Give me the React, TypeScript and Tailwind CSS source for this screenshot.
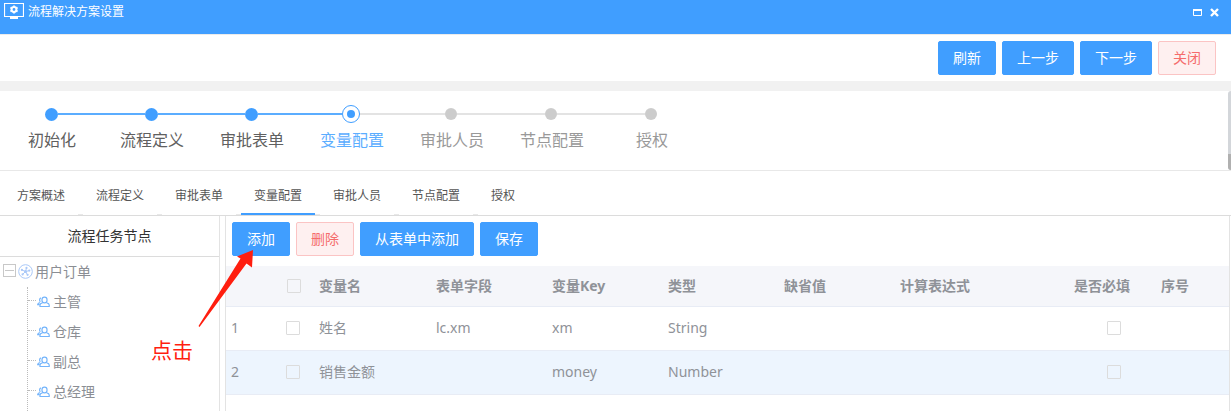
import { useState } from 'react'
import clsx from 'clsx'

const steps = ['初始化', '流程定义', '审批表单', '变量配置', '审批人员', '节点配置', '授权']
const tabs = ['方案概述', '流程定义', '审批表单', '变量配置', '审批人员', '节点配置', '授权']
const taskNodes = ['主管', '仓库', '副总', '总经理']
const currentStep = 3

const variables = [
  { name: '姓名', field: 'lc.xm', key: 'xm', type: 'String' },
  { name: '销售金额', field: '', key: 'money', type: 'Number' },
]

type ButtonProps = { children: string; danger?: boolean }

function Button({ children, danger }: ButtonProps) {
  return (
    <button
      type="button"
      className={clsx(
        'h-[34px] shrink-0 rounded-[2px] border px-[14px] text-sm leading-none',
        danger ? 'border-[#fbc4c4] bg-[#fef0f0] text-[#f56c6c]' : 'border-[#409eff] bg-[#409eff] text-white'
      )}
    >
      {children}
    </button>
  )
}

function Checkbox({ label }: { label: string }) {
  return (
    <input
      type="checkbox"
      aria-label={label}
      className="block size-[14px] appearance-none rounded-[1px] border border-[#dcdcdc] checked:bg-[#409eff]"
    />
  )
}

function SolutionIcon() {
  return (
    <svg width="20" height="18" viewBox="0 0 20 18" fill="none" aria-hidden="true">
      <path d="M.5 1.500h19v13H.5z" stroke="#fff" strokeWidth="1.200" />
      <path d="M6 15h8v2H6z" fill="#fff" />
      <circle cx="10" cy="7.500" r="2.400" stroke="#fff" strokeWidth="2" />
      <path
        d="M10 3.400v1.400M10 10.200v1.400M6.400 5.400l1.300.8M12.300 8.800l1.300.8M6.400 9.600l1.300-.8M12.300 6.200l1.300-.8"
        stroke="#fff"
        strokeWidth="1.800"
      />
    </svg>
  )
}

function FlowIcon() {
  return (
    <svg width="15" height="15" viewBox="0 0 15 15" fill="none" stroke="#a9c8f8" aria-hidden="true">
      <circle cx="7.500" cy="7.500" r="6.800" />
      <path d="M7.500 7.500 8.500 4M7.500 7.500l3.600-.8M7.500 7.500l1.800 3M7.500 7.500l-2.800 2.800M7.500 7.500 4 6" />
      <g fill="#a9c8f8" stroke="none">
        <circle cx="7.500" cy="7.500" r="1.500" />
        <circle cx="8.500" cy="3.900" r="1.100" />
        <circle cx="11.300" cy="6.600" r="1.100" />
        <circle cx="9.600" cy="10.800" r="1.100" />
        <circle cx="4.600" cy="10.400" r="1.100" />
        <circle cx="3.900" cy="5.900" r="1.100" />
      </g>
    </svg>
  )
}

function UsersIcon() {
  return (
    <svg width="13" height="12" viewBox="0 0 13 12" fill="none" stroke="#74b4fb" strokeWidth="1.200" aria-hidden="true">
      <rect x="5" y="1.200" width="5" height="5.600" rx="2.400" />
      <path d="M5.500 6.900C4 7.200 3 7.800 3 9v1.500h9.200V9c0-1.200-1-1.800-2.500-2.100" />
      <path d="M3.900 1.900C3 2.200 2.600 3 2.600 3.900c0 .8.300 1.400.8 1.800M3 6.600C1.500 6.900.7 7.600.7 8.600h2" />
    </svg>
  )
}

function WindowHeader() {
  return (
    <header className="border-b border-[#ebebeb] bg-[#409eff] pb-[10px] text-white">
      <div className="flex h-6 items-center pr-3 pl-1">
        <div className="mb-[3px]">
          <SolutionIcon />
        </div>
        <h1 className="ml-1 flex-1 text-xs">流程解决方案设置</h1>
        <button type="button" aria-label="最大化" className="mr-2">
          <svg width="9" height="7" viewBox="0 0 9 7" fill="none" stroke="#fff">
            <path d="M.5 1v5.500h8V1" />
            <path d="M0 1h9" strokeWidth="2" />
          </svg>
        </button>
        <button type="button" aria-label="关闭窗口">
          <svg width="9" height="9" viewBox="0 0 9 9" stroke="#fff" strokeWidth="2.400">
            <path d="m1 1 7 7M8 1 1 8" />
          </svg>
        </button>
      </div>
    </header>
  )
}

function StepDot({ index }: { index: number }) {
  if (index === currentStep) {
    return (
      <span className="flex size-[18px] items-center justify-center rounded-full border border-[#409eff]">
        <span className="size-2 rounded-full bg-[#409eff]" />
      </span>
    )
  }
  return (
    <span className={clsx('rounded-full', index < currentStep ? 'size-[13px] bg-[#409eff]' : 'size-3 bg-[#ccc]')} />
  )
}

function Stepper() {
  const lineColor = (done: boolean) => (done ? 'bg-[#5badff]' : 'bg-[#e3e3e3]')

  return (
    <div className="flex border-b border-[#e8e8e8]">
      <ol className="flex h-[79px] flex-1 pt-[14px] pl-px">
        {steps.map((step, i) => (
          <li
            key={step}
            aria-current={i === currentStep ? 'step' : undefined}
            className={clsx(
              'w-[100px] text-center text-base leading-6',
              i < currentStep && 'text-[#606060]',
              i === currentStep && 'text-[#5badff]',
              i > currentStep && 'text-[#999]'
            )}
          >
            <div className="flex h-[18px] items-center">
              <span className={clsx('h-0.5 flex-1', i > 0 && lineColor(i <= currentStep))} />
              <StepDot index={i} />
              <span className={clsx('h-0.5 flex-1', i < steps.length - 1 && lineColor(i < currentStep))} />
            </div>
            <div className="mt-[5px] pl-[2px]">{step}</div>
          </li>
        ))}
      </ol>
      <div className="flex w-[3px] flex-col overflow-hidden rounded-l-full bg-[#d3d6da]">
        <span className="mt-auto h-4 bg-[#b0b0b0]" />
      </div>
    </div>
  )
}

function Tabs() {
  const [active, setActive] = useState(3)

  return (
    <div role="tablist" className="flex h-[45px] border-b border-[#dcdcdc] pl-1">
      {tabs.map((tab, i) => (
        <div key={tab} className="flex">
          <button
            type="button"
            role="tab"
            aria-selected={i === active}
            onClick={() => setActive(i)}
            className={clsx(
              'border-b-2 px-[13px] pt-2 text-xs text-[#555]',
              i === active ? 'border-[#409eff]' : 'border-transparent'
            )}
          >
            {tab}
          </button>
          {i < tabs.length - 1 && <span className="w-[5px] border-b border-[#e8e8e8]" />}
        </div>
      ))}
    </div>
  )
}

function TaskTree() {
  return (
    <aside className="flex w-[220px] shrink-0 flex-col border-r border-[#e3e3e3]">
      <h2 className="h-[41px] border-b border-[#dcdcdc] text-center text-sm leading-10 text-[#333]">流程任务节点</h2>
      <div className="flex h-[30px] items-center pb-px pl-[3px] text-sm text-[#8b8e94]">
        <button
          type="button"
          aria-label="折叠"
          className="mr-[2px] mb-[2px] flex size-[13px] items-center justify-center border border-[#c8c8c8]"
        >
          <span className="h-px w-[9px] bg-[#c8c8c8]" />
        </button>
        <FlowIcon />
        <span className="ml-[2px]">用户订单</span>
      </div>
      <ul className="ml-[27px] flex-1 border-l border-dotted border-[#bbb] text-sm text-[#8b8e94]">
        {taskNodes.map((node) => (
          <li key={node} className="flex h-[30px] items-center">
            <span className="mr-px mb-1 w-2 border-t border-dotted border-[#bbb]" />
            <UsersIcon />
            <span className="ml-[3px]">{node}</span>
          </li>
        ))}
      </ul>
    </aside>
  )
}

function VariableTable() {
  return (
    <table className="w-full table-fixed text-left text-sm text-[#8f9298]">
      <colgroup>
        <col className="w-[50px]" />
        <col className="w-[33px]" />
        <col className="w-[117px]" />
        <col className="w-[116px]" />
        <col className="w-[116px]" />
        <col className="w-[116px]" />
        <col className="w-[116px]" />
        <col className="w-[174px]" />
        <col className="w-[87px]" />
        <col />
      </colgroup>
      <thead>
        <tr className="h-10 border-b border-[#e8ecf5] bg-[#f5f6fa]">
          <th aria-label="行号" />
          <th className="pl-[11px]">
            <Checkbox label="全选" />
          </th>
          {['变量名', '表单字段', '变量Key', '类型', '缺省值', '计算表达式', '是否必填', '序号'].map((title) => (
            <th key={title} className="pl-[10px] font-bold whitespace-nowrap">
              {title}
            </th>
          ))}
        </tr>
      </thead>
      <tbody>
        {variables.map((v, i) => (
          <tr key={v.key} className={clsx('h-11 border-b border-[#e8ecf5]', i % 2 === 1 && 'bg-[#edf5fe]')}>
            <td className="pl-[5px]">{i + 1}</td>
            <td className="pl-[10px]">
              <Checkbox label={`选择${v.name}`} />
            </td>
            <td className="pl-[10px]">{v.name}</td>
            <td className="pl-[10px]">{v.field}</td>
            <td className="pl-[10px]">{v.key}</td>
            <td className="pl-[10px]">{v.type}</td>
            <td />
            <td />
            <td className="pl-[43px]">
              <Checkbox label={`${v.name}是否必填`} />
            </td>
            <td />
          </tr>
        ))}
      </tbody>
    </table>
  )
}

// Red arrow and caption pointing at the add button
function ClickHint() {
  return (
    <div className="pointer-events-none absolute top-[34px] left-[151px] text-[#ff1e0f]">
      <svg width="104" height="79" viewBox="0 0 104 79" fill="currentColor" aria-hidden="true">
        <path d="M102 0 101 17.500 95.500 13.500 48.500 77 47.500 76 89.500 8.500 86 6.500z" />
      </svg>
      <span className="block text-[21px] leading-[42px]">点击</span>
    </div>
  )
}

export default function App() {
  return (
    <div className="flex min-h-screen flex-col bg-white font-['Noto_Sans','Noto_Sans_CJK_SC',sans-serif]">
      <WindowHeader />

      {/* Toolbar */}
      <div className="flex justify-end gap-[6px] border-b-[10px] border-[#f1f1f1] py-[6px] pr-[15px]">
        <Button>刷新</Button>
        <Button>上一步</Button>
        <Button>下一步</Button>
        <Button danger>关闭</Button>
      </div>

      <Stepper />
      <Tabs />

      <main className="relative flex flex-1">
        <TaskTree />
        <section className="ml-[5px] min-w-0 flex-1 border-l border-[#e3e3e3]">
          <div className="mr-px h-full border-r border-[#e3e3e3]">
            <div className="flex gap-[6px] pt-[6px] pb-[10px] pl-[6px]">
              <Button>添加</Button>
              <Button danger>删除</Button>
              <Button>从表单中添加</Button>
              <Button>保存</Button>
            </div>
            <VariableTable />
          </div>
        </section>
        <ClickHint />
      </main>
    </div>
  )
}
